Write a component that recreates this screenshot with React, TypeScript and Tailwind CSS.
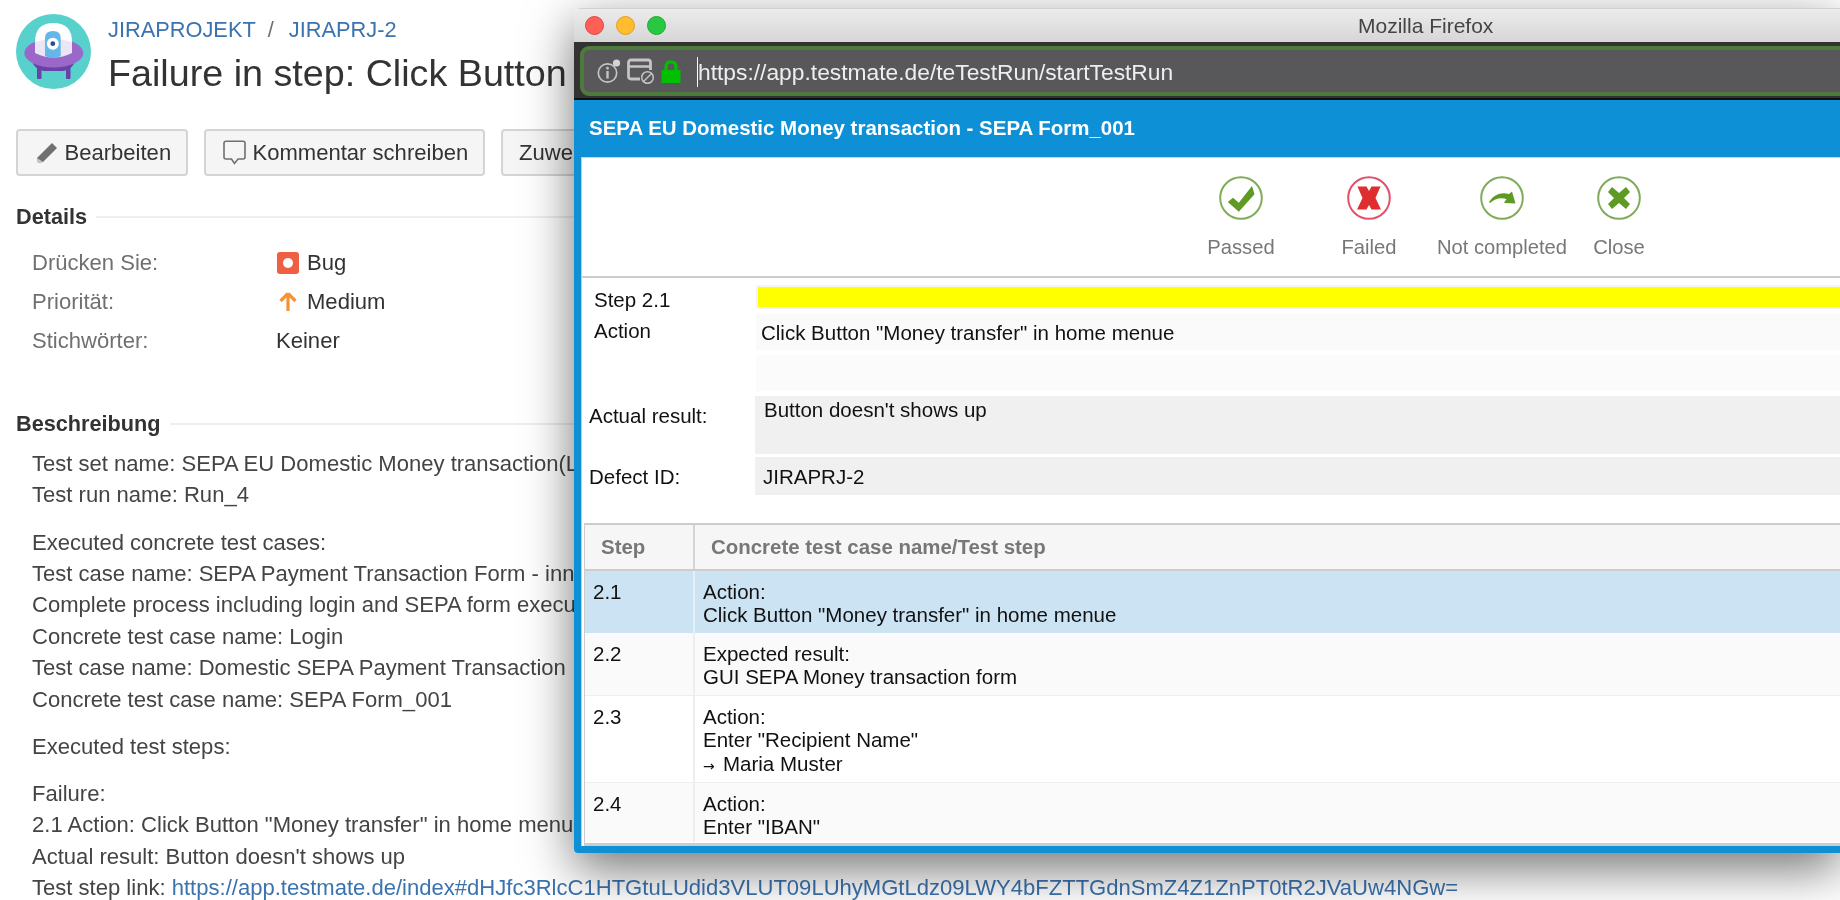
const Avatar = () => (
  <svg width="75" height="75" viewBox="0 0 75 75" className="shrink-0">
    <circle cx="37.5" cy="37.5" r="37.5" fill="#58d0cc" />
    <path d="M15 46 Q20 57 28 57 H47 Q55 57 60 46 Z" fill="#6a41a8" />
    <rect x="21" y="52" width="4.5" height="13" rx="1" fill="#6a41a8" />
    <rect x="50" y="52" width="4.5" height="13" rx="1" fill="#6a41a8" />
    <ellipse cx="37.8" cy="39" rx="29.5" ry="14.5" fill="#9a68c9" />
    <path d="M19 30 V28 Q19 9 37.5 9 Q56 9 56 28 V30 Z" fill="#ffffff" />
    <path d="M19 28 Q37.5 22 56 28 V39 Q37.5 48 19 39 Z" fill="#ece5f5" />
    <path d="M29 42 V24 Q29 17 37 17 Q44.7 17 44.7 24 V42 Q37 46 29 42 Z" fill="#63b8e8" />
    <circle cx="36.8" cy="29.7" r="6" fill="#ffffff" />
    <circle cx="36.8" cy="29.7" r="2.4" fill="#2a4f86" />
  </svg>
);

const Pencil = () => (
  <svg width="22" height="22" viewBox="0 0 22 22" className="shrink-0">
    <path d="M16 1 L21 6 L7 20 L2 21 L1 16 Z" fill="#707070" />
    <path d="M1 16 L2 21 L7 20 Z" fill="#c8c8c8" />
  </svg>
);

const Bubble = () => (
  <svg width="23" height="25" viewBox="0 0 23 25" className="shrink-0">
    <path d="M3 1.2 H20 Q22 1.2 22 3 V17 Q22 19 20 19 H15 L11.5 23.5 L8.5 19 H3 Q1 19 1 17 V3 Q1 1.2 3 1.2 Z" fill="none" stroke="#707070" strokeWidth="1.6" />
  </svg>
);

const BugIcon = () => (
  <svg width="22" height="22" viewBox="0 0 22 22">
    <rect width="22" height="22" rx="3" fill="#ef5f43" />
    <circle cx="11" cy="11" r="5" fill="#ffffff" />
  </svg>
);

const ArrowUp = () => (
  <svg width="22" height="22" viewBox="0 0 22 22">
    <path d="M11 2.5 L18.5 10 M11 2.5 L3.5 10 M11 3 V20" fill="none" stroke="#f79232" strokeWidth="3.2" />
  </svg>
);

const Ring = ({ color, children }: { color: string; children: React.ReactNode }) => (
  <svg width="44" height="44" viewBox="0 0 44 44">
    <circle cx="22" cy="22" r="20.8" fill="#ffffff" stroke={color} strokeWidth="2" />
    {children}
  </svg>
);

const InfoIcon = () => (
  <svg width="24" height="26" viewBox="0 0 24 26">
    <circle cx="10.5" cy="15" r="9.2" fill="none" stroke="#c4c4c4" strokeWidth="1.7" />
    <circle cx="19.5" cy="5" r="3.6" fill="#d4d4d4" />
    <rect x="9.2" y="8.8" width="2.6" height="2.6" rx="1" fill="#c4c4c4" />
    <rect x="9.3" y="13" width="2.4" height="7.5" fill="#c4c4c4" />
  </svg>
);

const PermIcon = () => (
  <svg width="28" height="26" viewBox="0 0 28 26">
    <path d="M13 21 H4 Q1.5 21 1.5 18.5 V4.5 Q1.5 2 4 2 H21 Q23.5 2 23.5 4.5 V12" fill="none" stroke="#c4c4c4" strokeWidth="2.8" />
    <path d="M1.5 8.5 H23.5" stroke="#c4c4c4" strokeWidth="2.4" />
    <circle cx="20.5" cy="19.5" r="5.8" fill="none" stroke="#c4c4c4" strokeWidth="1.5" />
    <path d="M16.5 23.5 L24.5 15.5" stroke="#c4c4c4" strokeWidth="1.5" />
  </svg>
);

const LockIcon = () => (
  <svg width="20" height="23" viewBox="0 0 20 23">
    <path d="M5 11 V7 Q5 1.8 10 1.8 Q15 1.8 15 7 V11" fill="none" stroke="#00c000" strokeWidth="3.2" />
    <rect x="0.5" y="10" width="19" height="13" fill="#00c000" />
  </svg>
);

const actions = [
  {
    label: 'Passed',
    w: 'w-[130px]',
    icon: (
      <Ring color="#80ab58">
        <path d="M8.8 26 L14 21.7 L19.8 26.7 L33 10 L35.5 18.3 L19.8 35.7 Z" fill="#5f9a24" />
      </Ring>
    ),
  },
  {
    label: 'Failed',
    w: 'w-[126px]',
    icon: (
      <Ring color="#e2506a">
        <path d="M10.5 10.5 H19.5 L22 15 L24.5 10.5 H33.5 L28.5 22 L34 33.5 H24.5 L22 29 L19.5 33.5 H10 L15.5 22 Z" fill="#e02d2d" />
      </Ring>
    ),
  },
  {
    label: 'Not completed',
    w: 'w-[140px]',
    icon: (
      <Ring color="#80ab58">
        <path d="M9 26 Q16 15 29 18 L32 15.5 L35.5 27.5 L24 27 L26.5 23 Q17 20.5 10 27 Z" fill="#5f9a24" />
      </Ring>
    ),
  },
  {
    label: 'Close',
    w: 'w-[94px]',
    icon: (
      <Ring color="#80ab58">
        <path d="M15 11 L22 17 L29 11 L33 16 L27 22 L33 28 L29 33 L22 27 L15 33 L11 28 L17 22 L11 16 Z" fill="#5f9a24" />
      </Ring>
    ),
  },
];

const descriptionGroups = [
  ['Test set name: SEPA EU Domestic Money transaction(L', 'Test run name: Run_4'],
  [
    'Executed concrete test cases:',
    'Test case name: SEPA Payment Transaction Form - inn',
    'Complete process including login and SEPA form execu',
    'Concrete test case name: Login',
    'Test case name: Domestic SEPA Payment Transaction',
    'Concrete test case name: SEPA Form_001',
  ],
  ['Executed test steps:'],
  ['Failure:', '2.1 Action: Click Button "Money transfer" in home menue', "Actual result: Button doesn't shows up"],
];

const SectionTitle = ({ title, className }: { title: string; className: string }) => (
  <div className={`flex items-center gap-[9px] ${className}`}>
    <h2 className="text-[21.7px] leading-[26px] font-bold text-[#333333]">{title}</h2>
    <div className="h-[2px] flex-1 bg-[#eeeeee]" />
  </div>
);

const DetailRow = ({ label, icon, value }: { label: string; icon?: React.ReactNode; value: string }) => (
  <div className="flex h-[39px] items-center pl-4">
    <div className="w-[244px] text-[#707070]">{label}</div>
    {icon && <div className="mr-2 ml-px flex h-[22px] w-[22px] items-center justify-center">{icon}</div>}
    <div className="text-[#333333]">{value}</div>
  </div>
);

const TableRow = ({ num, lines, className, divider }: { num: string; lines: React.ReactNode[]; className: string; divider: string }) => (
  <div className={`grid grid-cols-[110px_1fr] text-[20.5px] leading-[23.5px] text-[#111111] ${className}`}>
    <div className={`border-r-2 pt-[8.5px] pl-2 ${divider}`}>{num}</div>
    <div className="pt-[8.5px] pl-[8px]">
      {lines.map((line, i) => (
        <div key={i}>{line}</div>
      ))}
    </div>
  </div>
);

export default function App() {
  return (
    <div className="relative h-[900px] w-[1840px] overflow-hidden bg-white font-['Liberation_Sans',Arial,sans-serif] text-[22.05px] blur-[0.4px]">
      {/* Jira issue page */}
      <div className="w-[1500px] pt-[14px] pl-4 whitespace-nowrap">
        <div className="flex gap-[17px]">
          <Avatar />
          <div className="pt-[2px]">
            <div className="flex text-[21.8px] leading-[28px] text-[#3b73af]">
              <span>JIRAPROJEKT</span>
              <span className="mr-[15px] ml-[12px] text-[#707070]">/</span>
              <span>JIRAPRJ-2</span>
            </div>
            <h1 className="mt-[7px] text-[37.7px] leading-[44px] text-[#333333]">Failure in step: Click Button</h1>
          </div>
        </div>

        <div className="mt-[34px] flex gap-4 text-[#333333]">
          <button className="flex h-[47px] w-[172px] items-center gap-[6.5px] rounded border-2 border-[#d4d4d4] bg-[#f5f5f5] pl-[18px]">
            <Pencil />
            Bearbeiten
          </button>
          <button className="flex h-[47px] w-[281px] items-center gap-[6.5px] rounded border-2 border-[#d4d4d4] bg-[#f5f5f5] pl-[17px]">
            <Bubble />
            Kommentar schreiben
          </button>
          <button className="flex h-[47px] w-[180px] items-center rounded border-2 border-[#d4d4d4] bg-[#f5f5f5] pl-4">
            Zuweisen
          </button>
        </div>

        <SectionTitle title="Details" className="mt-[28px]" />
        <div className="mt-[13px]">
          <DetailRow label="Drücken Sie:" icon={<BugIcon />} value="Bug" />
          <DetailRow label="Priorität:" icon={<ArrowUp />} value="Medium" />
          <DetailRow label="Stichwörter:" value="Keiner" />
        </div>

        <SectionTitle title="Beschreibung" className="mt-[51px]" />
        <div className="mt-[11px] pl-4 leading-[31.4px] text-[#444444]">
          {descriptionGroups.map((group, i) => (
            <div key={i} className="mb-[15.7px]">
              {group.map((line) => (
                <div key={line}>{line}</div>
              ))}
            </div>
          ))}
          <div className="-mt-[15.7px]">
            Test step link:{' '}
            <a className="text-[#3b73af]">https://app.testmate.de/index#dHJfc3RlcC1HTGtuLUdid3VLUT09LUhyMGtLdz09LWY4bFZTTGdnSmZ4Z1ZnPT0tR2JVaUw4NGw=</a>
          </div>
        </div>
      </div>

      {/* Firefox popup window */}
      <div className="absolute top-[8px] left-[574px] flex h-[845px] w-[1266px] flex-col overflow-hidden rounded-tl-[7px] rounded-bl-[4px] shadow-[0_16px_50px_rgba(0,0,0,0.55)]">
        <div className="flex h-[34px] shrink-0 items-center border-t border-[#d0d0d0] bg-gradient-to-b from-[#ececec] to-[#d6d6d6] pl-[11px]">
          <span className="h-[19px] w-[19px] rounded-full border border-[#e0443e] bg-[#ff5f57]" />
          <span className="ml-3 h-[19px] w-[19px] rounded-full border border-[#dea123] bg-[#febc2e]" />
          <span className="ml-3 h-[19px] w-[19px] rounded-full border border-[#1aab29] bg-[#28c840]" />
          <span className="ml-[692px] text-[21px] text-[#444444]">Mozilla Firefox</span>
        </div>

        <div className="h-[58px] shrink-0 border-b-2 border-[#111111] bg-[#333333] pt-[4px] pl-[6px]">
          <div className="-mr-3 flex h-[50px] items-center rounded-l-[9px] border-4 border-[#4e7b3b] bg-[#58585a] pl-[13px] text-[22.8px] text-[#eeeeee]">
            <InfoIcon />
            <div className="ml-[6px]"><PermIcon /></div>
            <div className="ml-[6px]"><LockIcon /></div>
            <span className="mt-[2px] ml-[16px] border-l border-white leading-[30px]">https://app.testmate.de/teTestRun/startTestRun</span>
          </div>
        </div>

        <div className="flex h-[57px] shrink-0 items-center bg-[#0e90d7] pl-[15px] text-[20.48px] font-bold text-white">
          SEPA EU Domestic Money transaction - SEPA Form_001
        </div>

        <div className="flex-1 bg-[#0e90d7] pb-[7px] pl-[7px]">
          <div className="flex h-full flex-col border-t border-l border-t-[#d8d4cc] border-l-[#cccccc] bg-white text-[20.5px] text-[#111111]">
            <div className="flex h-[120px] shrink-0 border-b-2 border-[#cccccc] pt-[18px] pl-[594px]">
              {actions.map((a) => (
                <div key={a.label} className={`flex flex-col items-center ${a.w}`}>
                  {a.icon}
                  <span className="mt-[15px] text-[20.2px] leading-[24px] text-[#777777]">{a.label}</span>
                </div>
              ))}
            </div>

            <div className="mt-[7px] flex h-[24px] shrink-0">
              <div className="w-[174px] pl-[12px] leading-[30px]">Step 2.1</div>
              <div className="flex-1 border-y-2 border-l-2 border-[#f4f4f4] bg-[#ffff00]" />
            </div>
            <div className="mt-[5px] flex h-[36px] shrink-0 leading-[24px]">
              <div className="w-[174px] pt-[5px] pl-[12px]">Action</div>
              <div className="flex-1 bg-[#fafafa] pt-[7px] pl-[5px]">Click Button "Money transfer" in home menue</div>
            </div>
            <div className="mt-[5px] flex h-[36px] shrink-0">
              <div className="w-[174px]" />
              <div className="flex-1 bg-[#fbfbfb]" />
            </div>
            <div className="mt-[5px] flex h-[58px] shrink-0 leading-[24px]">
              <div className="w-[173px] pt-[8px] pl-[7px]">Actual result:</div>
              <div className="flex-1 bg-[#f0f0f0] pt-[2px] pl-[9px]">Button doesn't shows up</div>
            </div>
            <div className="mt-[3px] flex h-[38px] shrink-0 leading-[24px]">
              <div className="w-[173px] pt-[8px] pl-[7px]">Defect ID:</div>
              <div className="flex-1 bg-[#f0f0f0] pt-[8px] pl-[8px]">JIRAPRJ-2</div>
            </div>

            <div className="mt-[28px] ml-[2px] flex-1 border-b-[3px] border-l border-[#cccccc]">
              <div className="grid h-[48px] grid-cols-[110px_1fr] border-y-2 border-[#cccccc] bg-[#f6f6f6] text-[20.45px] font-bold text-[#777777]">
                <div className="flex items-center border-r-2 border-[#d4d4d4] pt-[1px] pl-4">Step</div>
                <div className="flex items-center pt-[1px] pl-4">Concrete test case name/Test step</div>
              </div>
              <TableRow
                num="2.1"
                lines={['Action:', 'Click Button "Money transfer" in home menue']}
                className="h-[62px] bg-[#cce3f3]"
                divider="border-[#e4eff8]"
              />
              <TableRow
                num="2.2"
                lines={['Expected result:', 'GUI SEPA Money transaction form']}
                className="h-[63px] border-b border-[#eeeeee] bg-[#fafafa]"
                divider="border-[#eeeeee]"
              />
              <TableRow
                num="2.3"
                lines={[
                  'Action:',
                  'Enter "Recipient Name"',
                  <>
                    <span className="inline-block w-[20px] font-['DejaVu_Sans',sans-serif] text-[14px]">→</span>Maria Muster
                  </>,
                ]}
                className="h-[87px] border-b border-[#eeeeee] bg-white"
                divider="border-[#eeeeee]"
              />
              <TableRow
                num="2.4"
                lines={['Action:', 'Enter "IBAN"']}
                className="h-[59px] bg-[#fafafa]"
                divider="border-[#eeeeee]"
              />
            </div>
          </div>
        </div>
      </div>
    </div>
  );
}
